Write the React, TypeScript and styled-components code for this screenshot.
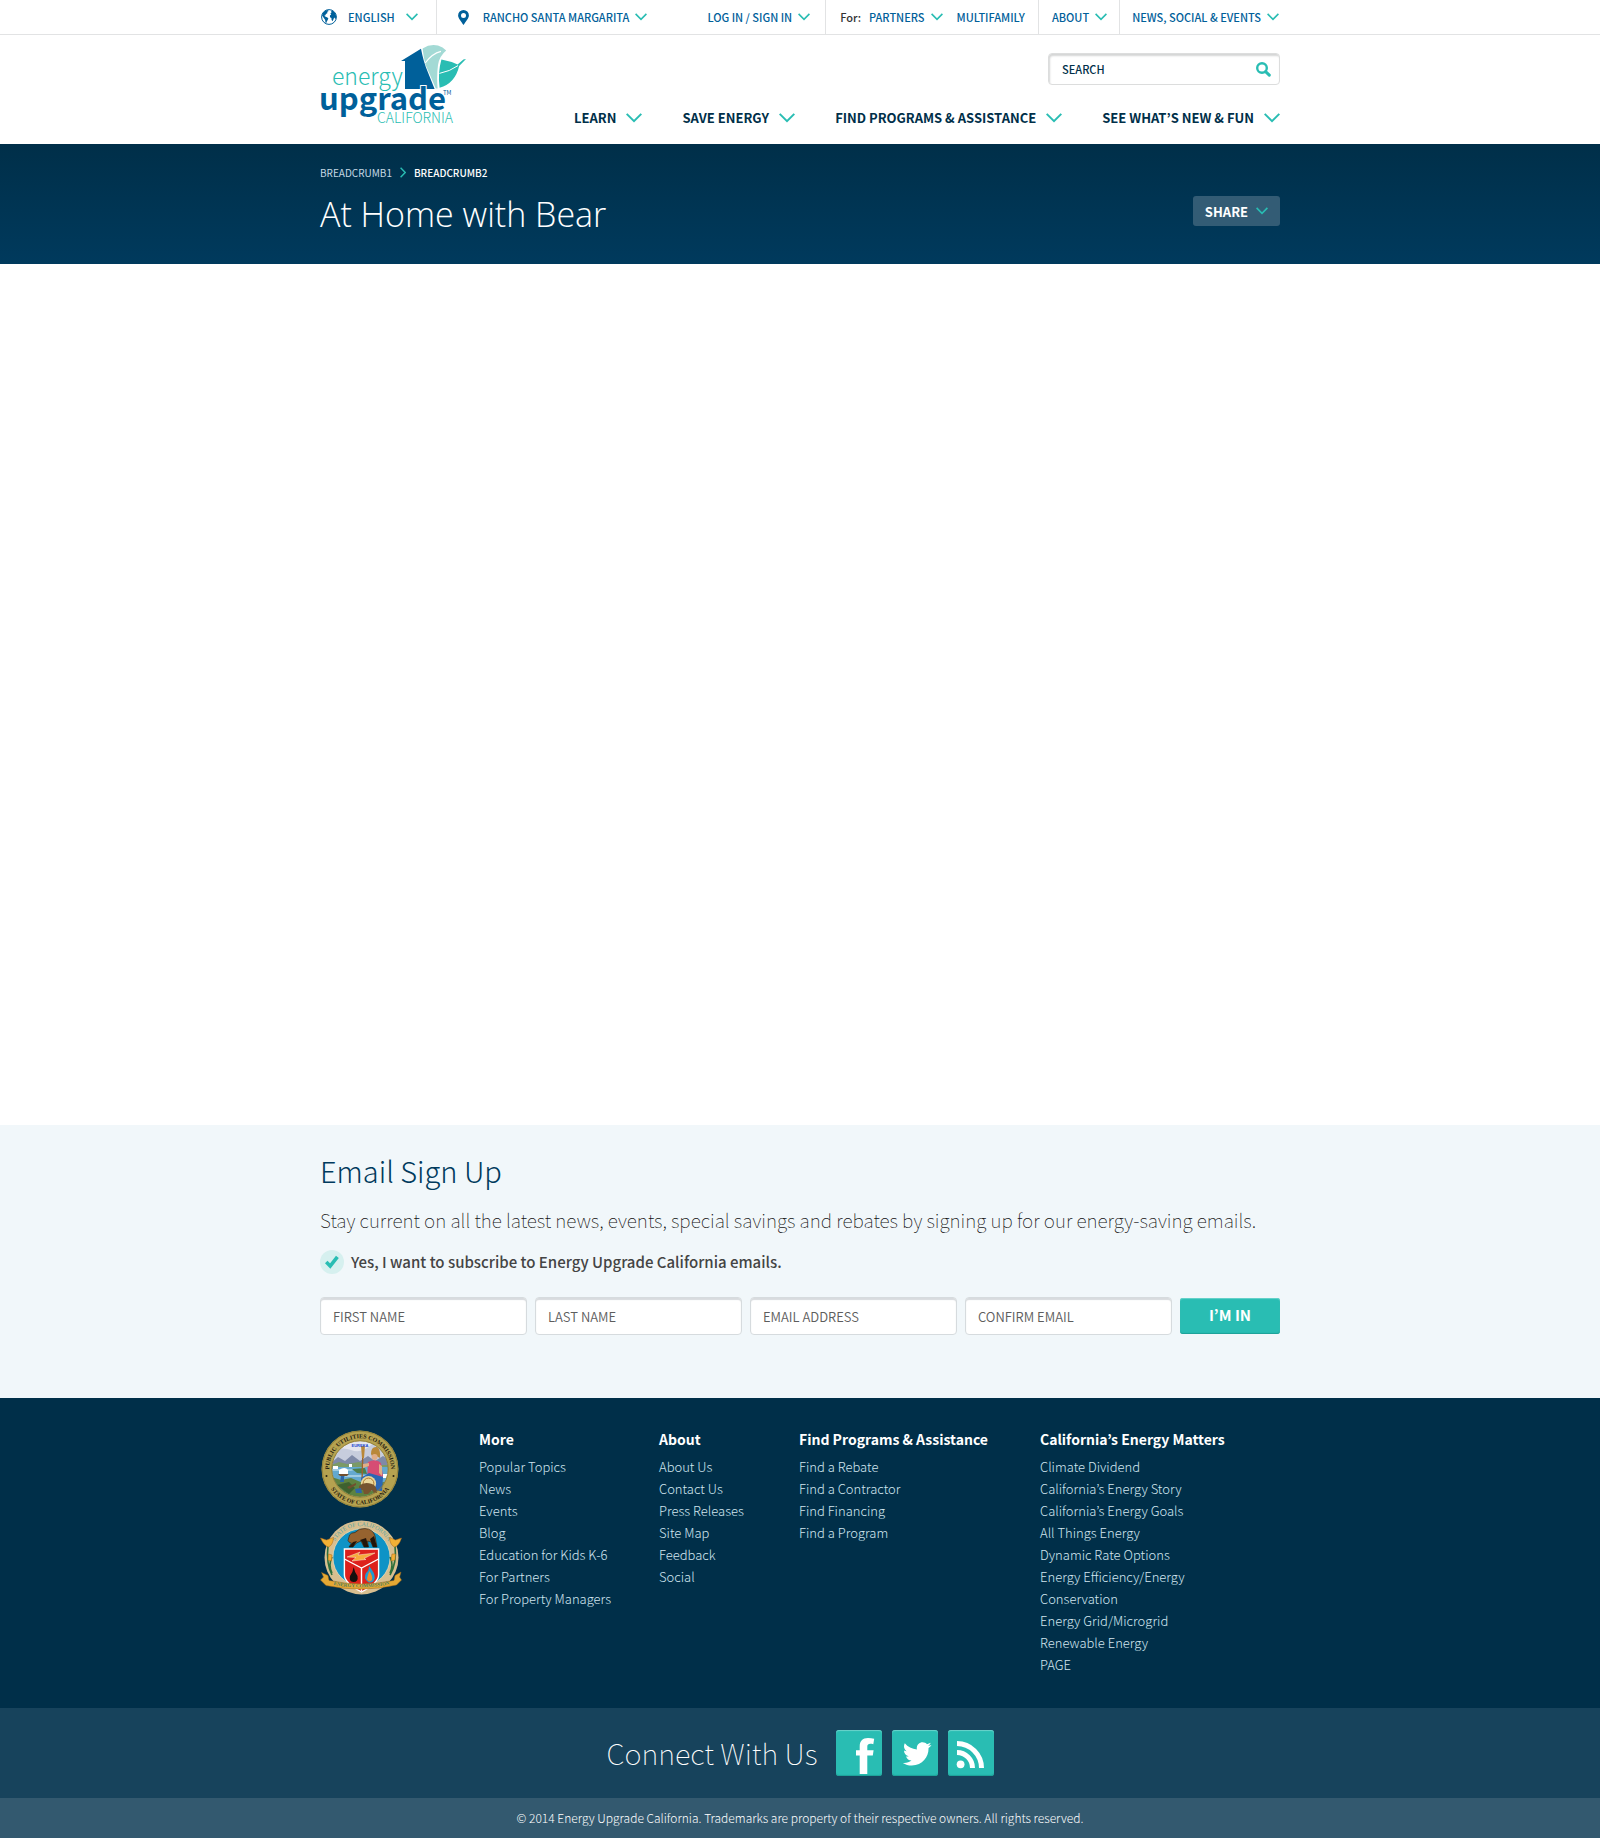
import React from 'react';
import styled, { createGlobalStyle } from 'styled-components';

const teal = '#29bdb3';
const navy = '#002f49';
const blue = '#00609a';
const rule = '#e2e3e4';
const sans = '"Noto Sans CJK KR", "Noto Sans", sans-serif';

const GlobalStyle = createGlobalStyle`
  *, *::before, *::after { box-sizing: border-box; }
  body { margin: 0; background: #fff; color: #444; font-family: ${sans}; }
  h1, h2, h3, p, ul, ol { margin: 0; padding: 0; }
  ul, ol { list-style: none; }
  button, input { font-family: inherit; }
  button { border: 0; background: none; padding: 0; cursor: pointer; }
  a { color: inherit; text-decoration: none; }
  svg { display: block; flex: none; }
`;

const Container = styled.div`
  width: 100%;
  max-width: 960px;
  margin: 0 auto;
`;

/* ---------- utility bar ---------- */

const UtilityBar = styled.div`
  border-bottom: 1px solid ${rule};
`;

const UtilityRow = styled(Container)`
  display: flex;
  justify-content: space-between;
`;

const UtilityGroup = styled.div`
  display: flex;
  height: 34px;
`;

const UtilityCell = styled.div<{ $divided?: boolean; $pad?: string }>`
  display: flex;
  align-items: center;
  gap: 14px;
  padding: ${(p) => p.$pad ?? '0 13px'};
  border-left: ${(p) => (p.$divided ? `1px solid ${rule}` : '0')};
`;

const UtilityButton = styled.button<{ $gap?: number }>`
  display: flex;
  align-items: center;
  gap: ${(p) => p.$gap ?? 6}px;
  color: ${blue};
  font-size: 11px;
  font-weight: 500;
  line-height: 20px;
  white-space: nowrap;
`;

const UtilityLink = styled.a`
  color: ${blue};
  font-size: 11px;
  font-weight: 500;
  line-height: 20px;
`;

const Audience = styled.div`
  display: flex;
  align-items: center;
  gap: 8px;
  color: #333;
  font-size: 11px;
  font-weight: 500;
  line-height: 20px;
`;

/* ---------- header ---------- */

const HeaderRow = styled(Container)`
  display: flex;
  justify-content: space-between;
  padding-bottom: 14px;
`;

const LogoLink = styled.a`
  padding-top: 10px;
`;

const HeaderSide = styled.div`
  display: flex;
  flex-direction: column;
  align-items: flex-end;
  gap: 21px;
  padding-top: 18px;
`;

const SearchForm = styled.form`
  display: flex;
  align-items: center;
  width: 232px;
  height: 32px;
  padding: 0 8px 0 13px;
  border: 1px solid #dcdddd;
  border-radius: 4px;
  box-shadow: inset 1px 2px 2px #d4d5d5;
`;

const SearchInput = styled.input`
  flex: 1;
  min-width: 0;
  padding: 0;
  border: 0;
  outline: 0;
  background: transparent;
  color: ${navy};
  font-size: 11px;
  font-weight: 500;
  line-height: 20px;
  &::placeholder { color: ${navy}; opacity: 1; }
`;

const SearchButton = styled.button`
  color: ${teal};
`;

const MainNav = styled.nav`
  display: flex;
  gap: 40px;
`;

const NavButton = styled.button`
  display: flex;
  align-items: center;
  gap: 10px;
  color: ${navy};
  font-size: 13px;
  font-weight: 700;
  line-height: 24px;
  white-space: nowrap;
`;

/* ---------- banner ---------- */

const Banner = styled.section`
  padding: 19px 0 28px;
  background: linear-gradient(${navy}, #003a5d);
  color: #fff;
`;

const Crumbs = styled.ol`
  display: flex;
  align-items: center;
  gap: 8px;
  margin-bottom: 10px;
  font-size: 10px;
  line-height: 19px;
`;

const Crumb = styled.li<{ $current?: boolean }>`
  display: flex;
  align-items: center;
  gap: 8px;
  color: ${(p) => (p.$current ? '#fff' : '#c5d9e4')};
  font-weight: ${(p) => (p.$current ? 500 : 400)};
`;

const TitleRow = styled.div`
  display: flex;
  align-items: flex-start;
  justify-content: space-between;
`;

const PageTitle = styled.h1`
  font-family: "Open Sans", "Noto Sans", sans-serif;
  font-size: 34px;
  font-weight: 300;
  line-height: 44px;
`;

const ShareButton = styled.button`
  display: flex;
  align-items: center;
  gap: 8px;
  height: 30px;
  margin-top: 4px;
  padding: 0 12px;
  border-radius: 3px;
  background: #335c75;
  color: #fff;
  font-size: 13px;
  font-weight: 700;
`;

const PageBody = styled.main`
  min-height: 861px;
`;

/* ---------- sign up ---------- */

const SignUp = styled.section`
  padding: 25px 0 63px;
  background: #f1f7fa;
`;

const SignUpTitle = styled.h2`
  margin-bottom: 15px;
  color: #003a5d;
  font-size: 29px;
  font-weight: 300;
  line-height: 40px;
`;

const Lead = styled.p`
  margin-bottom: 15px;
  color: #111;
  font-size: 19px;
  font-weight: 100;
  line-height: 30px;
`;

const ConsentLabel = styled.label`
  display: flex;
  align-items: center;
  gap: 7px;
  margin-bottom: 23px;
  font-size: 15px;
  font-weight: 500;
  line-height: 24px;
`;

const TickWrap = styled.span`
  position: relative;
  display: flex;
  svg {
    position: absolute;
    inset: 5px;
    pointer-events: none;
    visibility: hidden;
  }
  input:checked + svg { visibility: visible; }
`;

const Tick = styled.input`
  appearance: none;
  width: 24px;
  height: 24px;
  margin: 0;
  border-radius: 50%;
  background: #d6f0ef;
`;

const Fields = styled.div`
  display: flex;
  align-items: center;
  gap: 8px;
`;

const Field = styled.input`
  flex: 1;
  min-width: 0;
  height: 38px;
  padding: 0 12px;
  border: 1px solid #d6dbde;
  border-radius: 4px;
  background: #fff;
  box-shadow: inset 0 2px 1px #d8dbde;
  color: #444;
  font-size: 13px;
  font-weight: 350;
  &::placeholder { color: #5d5d5d; opacity: 1; }
`;

const SubmitButton = styled.button`
  width: 100px;
  height: 36px;
  padding-bottom: 3px;
  border-radius: 3px;
  background: ${teal};
  box-shadow: inset 0 1px 1px #6ad3cb, inset 0 -1px 1px #1da097;
  color: #fff;
  font-size: 15px;
  font-weight: 700;
`;

/* ---------- footer ---------- */

const FooterMain = styled.div`
  padding: 31px 0 32px;
  background: ${navy};
`;

const FooterGrid = styled(Container)`
  display: grid;
  grid-template-columns: 159fr 180fr 140fr 241fr 240fr;
`;

const Seals = styled.div`
  display: flex;
  flex-direction: column;
  gap: 12px;
`;

const FooterTitle = styled.h3`
  margin-bottom: 7px;
  color: #fff;
  font-size: 14px;
  font-weight: 700;
  line-height: 20px;
`;

const FooterLinks = styled.ul`
  max-width: 180px;
  color: #d2e6f0;
  font-size: 13px;
  font-weight: 300;
  line-height: 22px;
`;

const Connect = styled.div`
  display: flex;
  align-items: center;
  justify-content: center;
  gap: 18px;
  padding: 22px 0;
  background: #17435c;
`;

const ConnectTitle = styled.h2`
  padding-bottom: 2px;
  color: #fff;
  font-size: 29px;
  font-weight: 100;
  line-height: 44px;
`;

const SocialList = styled.div`
  display: flex;
  gap: 10px;
`;

const SocialLink = styled.a`
  width: 46px;
  height: 46px;
  border-radius: 3px;
  background: ${teal};
  box-shadow: inset 0 1px 1px #6ad3cb, inset 0 -1px 1px #1da097;
`;

const Copyright = styled.p`
  background: #33596f;
  color: #fff;
  font-size: 12px;
  font-weight: 300;
  line-height: 40px;
  text-align: center;
`;

/* ---------- drawings ---------- */

const Chevron = ({ large }: { large?: boolean }) => (
  <svg width={large ? 16 : 12} height={large ? 10 : 8} viewBox={large ? '0 0 16 10' : '0 0 12 8'} fill="none" stroke={teal} strokeWidth={large ? 2 : 1.6} aria-hidden="true">
    <path d={large ? 'M.7 .9L8 8.2L15.3 .9' : 'M.6 .9L6 6.4L11.4 .9'} />
  </svg>
);

const CrumbArrow = () => (
  <svg width="6" height="11" viewBox="0 0 6 11" fill="none" stroke={teal} strokeWidth="1.4" aria-hidden="true">
    <path d="M.6 .7L5.2 5.5L.6 10.3" />
  </svg>
);

const Globe = () => (
  <svg width="16" height="16" viewBox="0 0 16 16" aria-hidden="true">
    <circle cx="8" cy="8" r="7.4" fill="#fff" stroke={blue} strokeWidth="1" />
    <path fill={blue} d="M1 6.6L2.2 3.4L4.6 1.6L7.2 .9L7.4 2.2L6 3L6.6 4L5 5L4.2 6.4L3.2 6.8L4.2 7.6L6.4 8.4L7.4 9.6L6.4 11.4L5.6 13L5.2 14.4L4.4 13.2L4.2 11L2.8 9L1.8 7.4Z" />
    <path fill={blue} d="M9.8 1.4L12 2L14.4 4.4L15.2 7.4L14.6 10.2L13.2 8.6L12.4 10.6L11.6 12.2L10.6 11L10.4 9L9 8.2L8.9 6.4L10.2 5.4L9.4 4.5L10.6 3.2Z" />
  </svg>
);

const Pin = () => (
  <svg width="11" height="15" viewBox="0 0 11 15" fill={blue} fillRule="evenodd" aria-hidden="true">
    <path d="M5.5 0A5.4 5.4 0 0 1 10.9 5.4C10.9 8 8 11 5.5 15C3 11 .1 8 .1 5.4A5.4 5.4 0 0 1 5.5 0ZM5.5 3A2.5 2.5 0 1 0 5.5 8A2.5 2.5 0 1 0 5.5 3Z" />
  </svg>
);

const Magnifier = () => (
  <svg width="15" height="15" viewBox="0 0 15 15" fill="none" stroke={teal} aria-hidden="true">
    <circle cx="6" cy="6" r="4.8" strokeWidth="2.4" />
    <path d="M9.6 9.6L13.3 13.1" strokeWidth="3" strokeLinecap="round" />
  </svg>
);

const CheckMark = () => (
  <svg width="14" height="14" viewBox="0 0 14 14" fill="none" stroke={teal} strokeWidth="3.6" aria-hidden="true">
    <path d="M1.2 7L5.2 11L12.4 1.8" />
  </svg>
);

const Facebook = () => (
  <svg width="46" height="46" viewBox="0 0 46 46" fill="#fff" aria-hidden="true">
    <path d="M23.7 44V25.5H20V20.3H23.7V16.5C23.7 11 26.5 8 32 8Q35.2 8 38.2 8.8L37.3 14.3C33.8 13.4 31.3 13.7 31.3 16.6V20.3H37.6L36.8 25.5H31.3V44Z" />
  </svg>
);

const Twitter = () => (
  <svg width="46" height="46" viewBox="0 0 46 46" fill="#fff" aria-hidden="true">
    <path transform="translate(10.8 9.6) scale(.056)" d="M459.37 151.716c.325 4.548.325 9.097.325 13.645 0 138.72-105.583 298.558-298.558 298.558-59.452 0-114.68-17.219-161.137-47.106 8.447.974 16.568 1.299 25.34 1.299 49.055 0 94.213-16.568 130.274-44.832-46.132-.975-84.792-31.188-98.112-72.772 6.498.974 12.995 1.624 19.818 1.624 9.421 0 18.843-1.3 27.614-3.573-48.081-9.747-84.143-51.98-84.143-102.985v-1.299c13.969 7.797 30.214 12.67 47.431 13.319-28.264-18.843-46.781-51.005-46.781-87.391 0-19.492 5.197-37.36 14.294-52.954 51.655 63.675 129.3 105.258 216.365 109.807-1.624-7.797-2.599-15.918-2.599-24.04 0-57.828 46.782-104.934 104.934-104.934 30.213 0 57.502 12.67 76.67 33.137 23.715-4.548 46.456-13.32 66.599-25.34-7.798 24.366-24.366 44.833-46.132 57.827 21.117-2.273 41.584-8.122 60.426-16.243-14.292 20.791-32.161 39.308-52.628 54.253z" />
  </svg>
);

const Rss = () => (
  <svg width="46" height="46" viewBox="0 0 46 46" aria-hidden="true">
    <circle cx="12.6" cy="34.3" r="3.9" fill="#fff" />
    <path d="M9 22.5A15.6 15.6 0 0 1 24.5 38M9 13.5A24.6 24.6 0 0 1 33.5 38" fill="none" stroke="#fff" strokeWidth="5" />
  </svg>
);

const Logo = () => (
  <svg width="148" height="84" viewBox="0 0 148 84" role="img" aria-label="Energy Upgrade California">
    <path fill="#a3dad5" d="M102.6 3.4Q110 -1.2 118 .6Q123 2 126.2 5.6Q119.5 11 118 20Q116.5 31 117.6 43.4L115.8 43.4Q110.5 31 105.6 20Q103.5 12 102.6 3.4Z" />
    <path fill="none" stroke="#fff" strokeWidth="1.1" d="M105.2 18Q112 8.6 121 6.4" />
    <path fill={blue} d="M101 3.7Q103.5 17 108 27.5L114.6 44H85V16H81Z" />
    <path fill={teal} d="M121.4 14.6Q131 16.4 137.6 19.6L143.4 14.4L146 14L139.2 21Q135 38.6 119.6 42.8Q117.6 28 121.4 14.6Z" />
    <path fill="none" stroke="#fff" strokeWidth="1" d="M119.4 28.4Q130 26.4 138 20.6" />
    <text x="12" y="40" fontFamily={sans} fontSize="23" fontWeight="300" fill={teal}>energy</text>
    <text x="57" y="78" fontFamily={sans} fontSize="14" fontWeight="300" fill={teal}>CALIFORNIA</text>
    <text x="-1" y="65" fontFamily={sans} fontSize="31" fontWeight="700" fill={blue} stroke="#fff" strokeWidth="2" paintOrder="stroke">upgrade</text>
    <text x="123" y="50" fontFamily={sans} fontSize="6" fill={blue}>TM</text>
  </svg>
);

const UtilitiesSeal = () => (
  <svg width="82" height="79" viewBox="-1 -1 82 79" role="img" aria-label="Public Utilities Commission, State of California">
    <defs>
      <path id="puc-top" d="M9 46A30.8 30.8 0 1 1 69 46" />
      <path id="puc-bottom" d="M3.6 39A35.4 35.4 0 0 0 74.4 39" />
      <clipPath id="puc-clip"><circle cx="39" cy="39" r="28" /></clipPath>
    </defs>
    <circle cx="39" cy="39" r="38.5" fill="#b5a250" />
    <circle cx="39" cy="39" r="37.8" fill="none" stroke="#8d7b34" strokeWidth=".8" />
    <g clipPath="url(#puc-clip)">
      <rect x="10" y="10" width="58" height="58" fill="#e4e6ee" />
      <path fill="#c7cddd" d="M10 22Q20 16 30 20T50 15T68 24V32H10Z" />
      <path fill="#7f8aa8" d="M10 33L17 27L24 31L31 25L39 31L47 26L54 31L62 26L68 30V38H10Z" />
      <path fill="#7b9a67" d="M10 35L18 32L26 34L38 32L46 35H68V40H10Z" />
      <rect x="10" y="37" width="58" height="16" fill="#64a9cf" />
      <path fill="#9ecbe2" d="M10 39H36L30 41H10ZM24 45H46L40 47H24Z" />
      <path fill="#4e7f4a" d="M31 39L44 38L46 44L36 43Z" />
      <path fill="#5d8240" d="M10 47L20 50L30 48L42 53L68 52V68H10Z" />
      <path fill="#3e612f" d="M16 55L28 52L34 58L28 64Z" />
      <path fill="#fff" d="M18 40Q24 36 27 40V44H18ZM12 36H17V39H12ZM28 34H31V37H28ZM62 44H67V48H62Z" />
      <path fill="#714f2e" d="M17 44H28L26 46H19ZM26 57L35 53V55L28 59Z" />
    </g>
    <path stroke="#9a6330" strokeWidth="1.4" d="M42 18L41 52" />
    <path fill="#b98839" d="M40 16H44L43 28H41ZM50 24Q50 16 56 17Q60 20 59 28L55 26L52 28Z" />
    <circle cx="53.6" cy="27" r="3" fill="#e0ad88" />
    <path fill="#d64d74" d="M47 32Q55 28 60 33L62 46L58 50L46 49Z" />
    <path fill="#2b67b5" d="M40 48L48 43L62 47L61 61L42 60Z" />
    <path fill="#e2ae86" d="M42 34L48 33L48 36L42 38ZM58 34L61 36L61 46L58 43Z" />
    <circle cx="47.5" cy="53.5" r="7.6" fill="#ead79a" />
    <circle cx="47.5" cy="53.5" r="5.4" fill="none" stroke="#b07a2f" strokeWidth="1" />
    <path fill="#76542f" d="M38 56Q43 51 51 54Q56 56 56 63H53L51 60L47 64H43L42 60L38 60Z" />
    <path fill="#2d66a6" d="M34 59L40 58L41 63H35ZM20 46L23 46L23 52L19 52Z" />
    <circle cx="39" cy="39" r="28.2" fill="none" stroke="#8d7b34" strokeWidth=".9" />
    <text x="39" y="16.5" fontFamily="Liberation Sans, sans-serif" fontSize="4" fontWeight="700" fill="#1b4bd0" textAnchor="middle">EUREKA</text>
    <g fontFamily="Liberation Serif, serif" fontWeight="700" fontSize="6" fill="#252010" textAnchor="middle">
      <text><textPath href="#puc-top" startOffset="50%">PUBLIC UTILITIES COMMISSION</textPath></text>
      <text><textPath href="#puc-bottom" startOffset="50%">STATE OF CALIFORNIA</textPath></text>
    </g>
    <circle cx="5.5" cy="46" r="1" fill="#252010" />
    <circle cx="72.5" cy="46" r="1" fill="#252010" />
  </svg>
);

const EnergySeal = () => (
  <svg width="82" height="76" viewBox="0 0 82 76" role="img" aria-label="State of California Energy Commission">
    <defs>
      <path id="cec-top" d="M10.5 37A31 31 0 0 1 72.5 37" />
      <path id="cec-ribbon" d="M7 63.5Q41.5 71.5 76 63" />
    </defs>
    <circle cx="41.5" cy="37.4" r="37" fill="#d8bf90" />
    <circle cx="41.5" cy="37.4" r="28.6" fill="#0e93c6" stroke="#e8dab5" strokeWidth=".8" />
    <text fontFamily="Liberation Serif, serif" fontSize="6" fill="#53a3a0" textAnchor="middle"><textPath href="#cec-top" startOffset="50%">STATE OF CALIFORNIA</textPath></text>
    <path fill="none" stroke="#2d6f3b" strokeWidth="1.6" d="M8 26Q6 43 12 55M12 37Q8 45 12 53M75 26Q77 43 70 55M70 37Q74 45 70 53" />
    <path fill="#f2b035" stroke="#a8661a" strokeWidth=".5" d="M.5 18L6.5 20L13.5 17.5Q13 25 8.5 27Q4 26 .5 18ZM69.5 17.5L75.5 20L81.5 18Q79 26 74.5 27Q70 25 69.5 17.5ZM8.5 34L12 35L11.5 41L8 40ZM72 34L75.5 34L75 40L71 41Z" />
    <path fill="#96632f" stroke="#2a1a0c" strokeWidth=".6" d="M28 20.5L29.5 15Q31 12.5 35 12.5Q39 8 45 8.5Q53 9 55 16L57 27H53L51 22L47.5 21L48.5 27H44L41 21L36.5 23L33 27H29L31.5 23Q29 23 28 20.5Z" />
    <path fill="#22150a" d="M40 20L46 18L48.5 27H44L42 22ZM50 19L54 16L57 27H53ZM33 22L37 21L33 27H29Z" />
    <path fill="#dd211c" stroke="#fff" strokeWidth="1.4" d="M24.4 29H58.6V55Q58.6 63 41.5 72Q24.4 63 24.4 55Z" />
    <path fill="none" stroke="#fff" strokeWidth="1.4" d="M24.4 39L41.5 48L58.6 39M41.5 48V71" />
    <path fill="#f6a93b" stroke="#fff" strokeWidth=".4" d="M27 37L40 32L38 35L55 33L44 38.5L46 39.5L32 41L36 37.4Z" />
    <path fill="#15100e" d="M33.7 47Q34.5 52 37.5 56Q38.5 62 33.5 62Q28.5 61.5 30 56Q33 52 33.7 47Z" />
    <path fill="#1e9bd3" d="M49 46Q55 53 54.8 58Q53 64 48 62Q43 58 46 53Q49 51 49 46Z" />
    <path fill="#f08a2c" d="M49.4 51Q53 56 52 60Q49 63 47 59.5Q47 57 49.4 51Z" />
    <path fill="#e5a834" stroke="#9a6418" strokeWidth=".5" d="M.5 60L3.5 57L1.5 52.4L8 55.5L9 60.4Q41.5 67.5 74 60.4L75 55.5L81 52L79.6 57L81.5 60L76.5 65Q41.5 73 6 65.5Z" />
    <text fontFamily="Liberation Serif, serif" fontSize="5" fontWeight="700" fill="#4a7f64" textAnchor="middle"><textPath href="#cec-ribbon" startOffset="50%">ENERGY COMMISSION</textPath></text>
  </svg>
);

/* ---------- content ---------- */

const mainNav = ['LEARN', 'SAVE ENERGY', 'FIND PROGRAMS & ASSISTANCE', 'SEE WHAT’S NEW & FUN'];

const fields = [
  { label: 'FIRST NAME', type: 'text' },
  { label: 'LAST NAME', type: 'text' },
  { label: 'EMAIL ADDRESS', type: 'email' },
  { label: 'CONFIRM EMAIL', type: 'email' },
];

const footerColumns = [
  {
    title: 'More',
    links: ['Popular Topics', 'News', 'Events', 'Blog', 'Education for Kids K-6', 'For Partners', 'For Property Managers'],
  },
  { title: 'About', links: ['About Us', 'Contact Us', 'Press Releases', 'Site Map', 'Feedback', 'Social'] },
  {
    title: 'Find Programs & Assistance',
    links: ['Find a Rebate', 'Find a Contractor', 'Find Financing', 'Find a Program'],
  },
  {
    title: 'California’s Energy Matters',
    links: [
      'Climate Dividend',
      'California’s Energy Story',
      'California’s Energy Goals',
      'All Things Energy',
      'Dynamic Rate Options',
      'Energy Efficiency/Energy Conservation',
      'Energy Grid/Microgrid',
      'Renewable Energy',
      'PAGE',
    ],
  },
];

export default function App() {
  return (
    <>
      <GlobalStyle />
      <header>
        <UtilityBar>
          <UtilityRow>
            <UtilityGroup>
              <UtilityCell $pad="0 18px 0 1px">
                <UtilityButton type="button" $gap={11}><Globe />ENGLISH<Chevron /></UtilityButton>
              </UtilityCell>
              <UtilityCell $divided $pad="0 0 0 21px">
                <Pin />
                <UtilityButton type="button">RANCHO SANTA MARGARITA<Chevron /></UtilityButton>
              </UtilityCell>
            </UtilityGroup>
            <UtilityGroup>
              <UtilityCell $pad="0 15px 0 0">
                <UtilityButton type="button">LOG IN / SIGN IN<Chevron /></UtilityButton>
              </UtilityCell>
              <UtilityCell $divided $pad="0 13px 0 14px">
                <Audience>
                  For:
                  <UtilityButton type="button">PARTNERS<Chevron /></UtilityButton>
                </Audience>
                <UtilityLink href="#multifamily">MULTIFAMILY</UtilityLink>
              </UtilityCell>
              <UtilityCell $divided $pad="0 12px 0 13px">
                <UtilityButton type="button">ABOUT<Chevron /></UtilityButton>
              </UtilityCell>
              <UtilityCell $divided $pad="0 1px 0 12px">
                <UtilityButton type="button">NEWS, SOCIAL &amp; EVENTS<Chevron /></UtilityButton>
              </UtilityCell>
            </UtilityGroup>
          </UtilityRow>
        </UtilityBar>
        <HeaderRow>
          <LogoLink href="#home"><Logo /></LogoLink>
          <HeaderSide>
            <SearchForm role="search">
              <SearchInput type="text" aria-label="Search" placeholder="SEARCH" />
              <SearchButton type="submit" aria-label="Submit search"><Magnifier /></SearchButton>
            </SearchForm>
            <MainNav>
              {mainNav.map((item) => (
                <NavButton type="button" key={item}>{item}<Chevron large /></NavButton>
              ))}
            </MainNav>
          </HeaderSide>
        </HeaderRow>
      </header>

      <Banner>
        <Container>
          <Crumbs>
            <Crumb><a href="#breadcrumb1">BREADCRUMB1</a><CrumbArrow /></Crumb>
            <Crumb $current>BREADCRUMB2</Crumb>
          </Crumbs>
          <TitleRow>
            <PageTitle>At Home with Bear</PageTitle>
            <ShareButton type="button">SHARE<Chevron /></ShareButton>
          </TitleRow>
        </Container>
      </Banner>

      <PageBody />

      <SignUp>
        <Container as="form">
          <SignUpTitle>Email Sign Up</SignUpTitle>
          <Lead>Stay current on all the latest news, events, special savings and rebates by signing up for our energy-saving emails.</Lead>
          <ConsentLabel>
            <TickWrap><Tick type="checkbox" defaultChecked /><CheckMark /></TickWrap>
            Yes, I want to subscribe to Energy Upgrade California emails.
          </ConsentLabel>
          <Fields>
            {fields.map((field) => (
              <Field key={field.label} type={field.type} placeholder={field.label} aria-label={field.label} />
            ))}
            <SubmitButton type="submit">I’M IN</SubmitButton>
          </Fields>
        </Container>
      </SignUp>

      <footer>
        <FooterMain>
          <FooterGrid>
            <Seals><UtilitiesSeal /><EnergySeal /></Seals>
            {footerColumns.map((column) => (
              <div key={column.title}>
                <FooterTitle>{column.title}</FooterTitle>
                <FooterLinks>
                  {column.links.map((link) => (
                    <li key={link}><a href="#footer">{link}</a></li>
                  ))}
                </FooterLinks>
              </div>
            ))}
          </FooterGrid>
        </FooterMain>
        <Connect>
          <ConnectTitle>Connect With Us</ConnectTitle>
          <SocialList>
            <SocialLink href="#facebook" aria-label="Facebook"><Facebook /></SocialLink>
            <SocialLink href="#twitter" aria-label="Twitter"><Twitter /></SocialLink>
            <SocialLink href="#rss" aria-label="RSS feed"><Rss /></SocialLink>
          </SocialList>
        </Connect>
        <Copyright>© 2014 Energy Upgrade California. Trademarks are property of their respective owners. All rights reserved.</Copyright>
      </footer>
    </>
  );
}
